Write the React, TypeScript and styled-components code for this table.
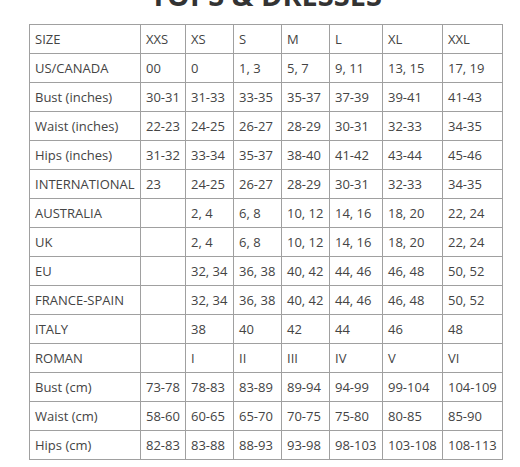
import React from "react";
import styled, { createGlobalStyle } from "styled-components";

const Global = createGlobalStyle`
  html, body { margin: 0; padding: 0; background: #fff; }
  body { font-family: "Open Sans", "DejaVu Sans", sans-serif; color: #444; overflow: hidden; }
`;

const Page = styled.div`
  width: 520px;
  height: 467px;
  overflow: hidden;
  padding-left: 29px;
  box-sizing: border-box;
`;

const Title = styled.h2`
  margin: -20px 0 0 0;
  width: 474px;
  text-align: center;
  font-size: 29px;
  line-height: 29px;
  font-weight: 700;
  color: #333;
  height: 29px;
`;

const Table = styled.table`
  margin-top: 15px;
  border-collapse: collapse;
  table-layout: fixed;
  width: 474px;
  font-size: 13px;
  color: #444;
`;

const Row = styled.tr`
  height: 29px;
`;

const Cell = styled.td`
  border: 1px solid #a0a0a0;
  padding: 0 0 0 5px;
  height: 28px;
  vertical-align: middle;
  white-space: nowrap;
  overflow: hidden;
  line-height: 18px;
`;

const widths = [111, 45, 48, 48, 48, 53, 60, 60];

const rows: string[][] = [
  ["SIZE", "XXS", "XS", "S", "M", "L", "XL", "XXL"],
  ["US/CANADA", "00", "0", "1, 3", "5, 7", "9, 11", "13, 15", "17, 19"],
  ["Bust (inches)", "30-31", "31-33", "33-35", "35-37", "37-39", "39-41", "41-43"],
  ["Waist (inches)", "22-23", "24-25", "26-27", "28-29", "30-31", "32-33", "34-35"],
  ["Hips (inches)", "31-32", "33-34", "35-37", "38-40", "41-42", "43-44", "45-46"],
  ["INTERNATIONAL", "23", "24-25", "26-27", "28-29", "30-31", "32-33", "34-35"],
  ["AUSTRALIA", "", "2, 4", "6, 8", "10, 12", "14, 16", "18, 20", "22, 24"],
  ["UK", "", "2, 4", "6, 8", "10, 12", "14, 16", "18, 20", "22, 24"],
  ["EU", "", "32, 34", "36, 38", "40, 42", "44, 46", "46, 48", "50, 52"],
  ["FRANCE-SPAIN", "", "32, 34", "36, 38", "40, 42", "44, 46", "46, 48", "50, 52"],
  ["ITALY", "", "38", "40", "42", "44", "46", "48"],
  ["ROMAN", "", "I", "II", "III", "IV", "V", "VI"],
  ["Bust (cm)", "73-78", "78-83", "83-89", "89-94", "94-99", "99-104", "104-109"],
  ["Waist (cm)", "58-60", "60-65", "65-70", "70-75", "75-80", "80-85", "85-90"],
  ["Hips (cm)", "82-83", "83-88", "88-93", "93-98", "98-103", "103-108", "108-113"],
];

export default function App() {
  return (
    <Page>
      <Global />
      <Title>TOPS &amp; DRESSES</Title>
      <Table>
        <colgroup>
          {widths.map((w, i) => (
            <col key={i} style={{ width: w }} />
          ))}
        </colgroup>
        <tbody>
          {rows.map((r, i) => (
            <Row key={i}>
              {r.map((c, j) => (
                <Cell key={j}>{c}</Cell>
              ))}
            </Row>
          ))}
        </tbody>
      </Table>
    </Page>
  );
}
